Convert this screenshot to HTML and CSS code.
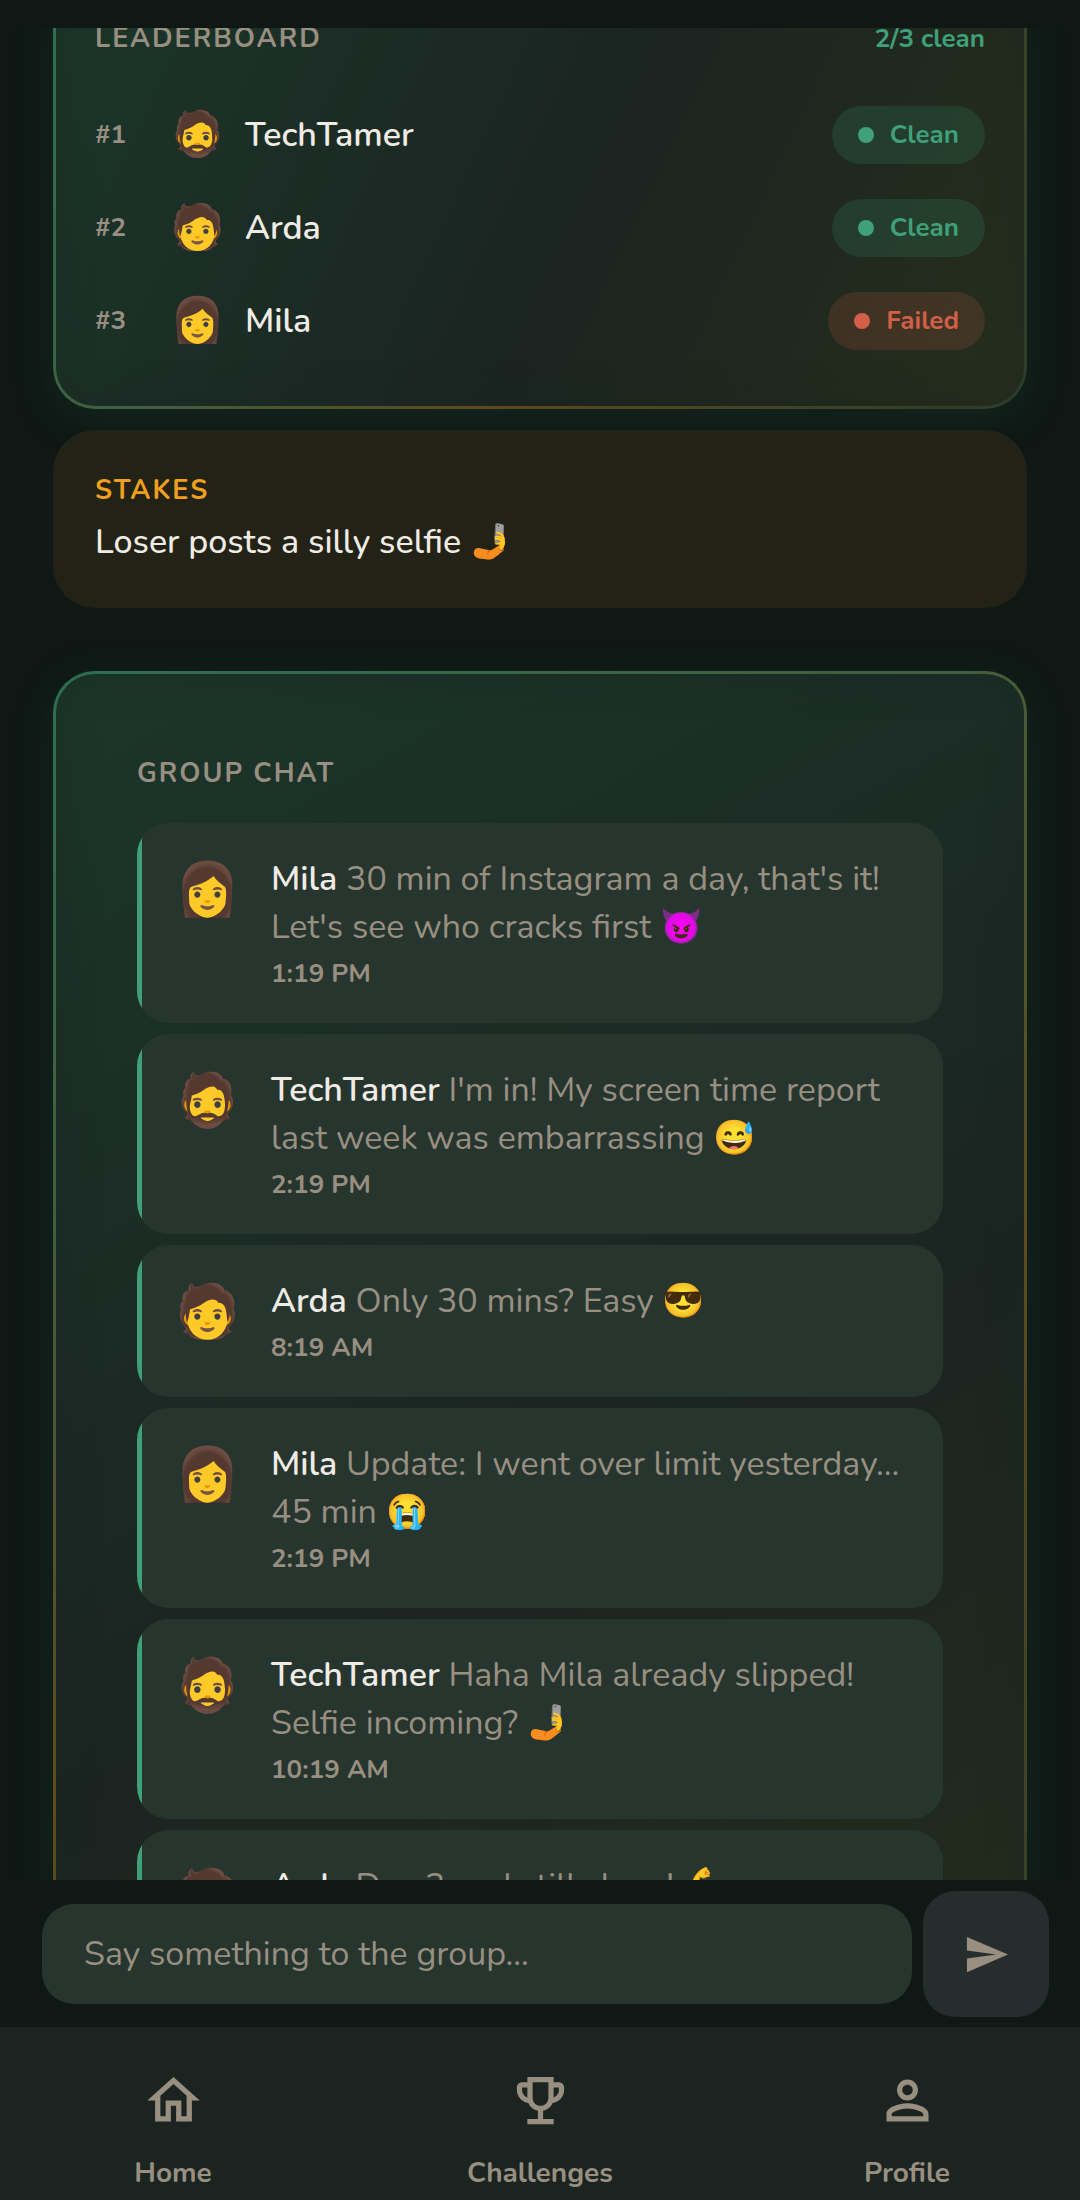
FILE: index.html
```html
<!DOCTYPE html>
<html lang="en">
<head>
  <meta charset="UTF-8">
  <title>Challenge</title>
  <meta name="viewport" content="width=device-width, initial-scale=1.0">
  <link rel="stylesheet" href="styles.css">
</head>
<body>

  <main class="feed">

    <!-- Leaderboard -->
    <section class="card leaderboard">
      <div class="card-header">
        <h2 class="label">LEADERBOARD</h2>
        <span class="clean-count">2/3 clean</span>
      </div>
      <ol class="ranks">
        <li class="rank-row">
          <span class="rank">#1</span>
          <span class="avatar">🧔</span>
          <span class="name">TechTamer</span>
          <span class="chip clean">Clean</span>
        </li>
        <li class="rank-row">
          <span class="rank">#2</span>
          <span class="avatar">🧑</span>
          <span class="name">Arda</span>
          <span class="chip clean">Clean</span>
        </li>
        <li class="rank-row">
          <span class="rank">#3</span>
          <span class="avatar">👩</span>
          <span class="name">Mila</span>
          <span class="chip failed">Failed</span>
        </li>
      </ol>
    </section>

    <!-- Stakes -->
    <section class="stakes">
      <h2 class="label">STAKES</h2>
      <p>Loser posts a silly selfie 🤳</p>
    </section>

    <!-- Group chat -->
    <section class="card chat">
      <h2 class="label">GROUP CHAT</h2>
      <div class="message">
        <span class="avatar">👩</span>
        <div class="message-body">
          <p><b>Mila</b> 30 min of Instagram a day, that's it! Let's see who cracks first 😈</p>
          <time>1:19 PM</time>
        </div>
      </div>
      <div class="message">
        <span class="avatar">🧔</span>
        <div class="message-body">
          <p><b>TechTamer</b> I'm in! My screen time report last week was embarrassing 😅</p>
          <time>2:19 PM</time>
        </div>
      </div>
      <div class="message">
        <span class="avatar">🧑</span>
        <div class="message-body">
          <p><b>Arda</b> Only 30 mins? Easy 😎</p>
          <time>8:19 AM</time>
        </div>
      </div>
      <div class="message">
        <span class="avatar">👩</span>
        <div class="message-body">
          <p><b>Mila</b> Update: I went over limit yesterday... 45 min 😭</p>
          <time>2:19 PM</time>
        </div>
      </div>
      <div class="message">
        <span class="avatar">🧔</span>
        <div class="message-body">
          <p><b>TechTamer</b> Haha Mila already slipped! Selfie incoming? 🤳</p>
          <time>10:19 AM</time>
        </div>
      </div>
      <div class="message">
        <span class="avatar">🧑</span>
        <div class="message-body">
          <p><b>Arda</b> Day 3 and still clean! 💪</p>
        </div>
      </div>
    </section>

  </main>

  <!-- Message box -->
  <form class="composer">
    <input type="text" aria-label="Message" placeholder="Say something to the group...">
    <button type="button" aria-label="Send">
      <svg viewBox="0 0 24 24"><path d="M2.01 21L23 12 2.01 3 2 10l15 2-15 2z"/></svg>
    </button>
  </form>

  <!-- Bottom navigation -->
  <nav class="tabs">
    <a href="#home">
      <svg viewBox="0 0 24 24"><path d="M12 5.69l5 4.5V18h-2v-6H9v6H7v-7.81l5-4.5M12 3L2 12h3v8h6v-6h2v6h6v-8h3L12 3z"/></svg>
      Home
    </a>
    <a href="#challenges">
      <svg viewBox="0 0 24 24"><path d="M19 5h-2V3H7v2H5c-1.1 0-2 .9-2 2v1c0 2.55 1.92 4.63 4.39 4.94.63 1.5 1.98 2.63 3.61 2.96V19H7v2h10v-2h-4v-3.1c1.63-.33 2.98-1.46 3.61-2.96C19.08 12.63 21 10.55 21 8V7c0-1.1-.9-2-2-2zM5 8V7h2v3.82C5.84 10.4 5 9.3 5 8zm7 6c-1.65 0-3-1.35-3-3V5h6v6c0 1.65-1.35 3-3 3zm7-6c0 1.3-.84 2.4-2 2.82V7h2v1z"/></svg>
      Challenges
    </a>
    <a href="#profile">
      <svg viewBox="0 0 24 24"><path d="M12 6c1.1 0 2 .9 2 2s-.9 2-2 2-2-.9-2-2 .9-2 2-2m0 9c2.7 0 5.8 1.29 6 2v1H6v-.99c.2-.72 3.3-2.01 6-2.01m0-11C9.79 4 8 5.79 8 8s1.79 4 4 4 4-1.79 4-4-1.79-4-4-4zm0 9c-2.67 0-8 1.34-8 4v3h16v-3c0-2.66-5.33-4-8-4z"/></svg>
      Profile
    </a>
  </nav>

</body>
</html>
```
FILE: styles.css
```css
* {
  box-sizing: border-box;
}

body {
  display: flex;
  flex-direction: column;
  height: 100vh;
  margin: 0;
  padding-top: 28px;
  overflow: hidden;
  background: #0f1815;
  color: #f0ebe4;
  font-family: Nunito, Lato, sans-serif;
  font-size: 34px;
  line-height: 48px;
}

h2, p, ol {
  margin: 0;
  padding: 0;
}

b {
  font-weight: 600;
}

.feed {
  flex: 1;
  min-height: 0;
  overflow: hidden;
  padding: 0 53px;
}

.label, .clean-count, .rank, .chip, time {
  font-size: 26px;
  font-weight: 700;
  line-height: 38px;
}

.label {
  font-size: 27px;
  letter-spacing: 2px;
  color: #988f80;
}

/* Cards */
.card {
  border: 3px solid transparent;
  border-radius: 42px;
  box-shadow: 0 10px 40px rgba(30, 80, 60, 0.25), inset 0 0 36px rgba(27, 37, 33, 0.5);
}

/* list is scrolled: the top of this card is above the feed */
.leaderboard {
  margin-top: -50px;
  padding: 39px;
  background:
    linear-gradient(115deg, #1b362a 0, #1b2421 54%, #262e1c 100%) padding-box,
    linear-gradient(115deg, #2b6f55 0, #5e4a1e 54%, #2a3d2b 100%) border-box;
}

.card-header {
  display: flex;
  justify-content: space-between;
}

.clean-count {
  color: #3fa07a;
}

.ranks {
  list-style: none;
  margin-top: 30px;
}

.rank-row {
  display: flex;
  align-items: center;
  height: 93px;
}

.rank {
  width: 68px;
  color: #988f80;
}

.avatar {
  flex: none;
  text-align: center;
}

.rank-row .avatar {
  width: 68px;
  font-size: 44px;
}

.name {
  flex: 1;
  margin-left: 14px;
  font-weight: 600;
}

.chip {
  display: flex;
  align-items: center;
  gap: 16px;
  padding: 10px 26px;
  border-radius: 42px;
}

.chip::before {
  content: "";
  width: 16px;
  height: 16px;
  border-radius: 50%;
  background: currentColor;
}

.clean {
  background: rgba(45, 125, 90, 0.25);
  color: #3fa07a;
}

.failed {
  background: rgba(210, 95, 70, 0.17);
  color: #d25f48;
}

/* Stakes */
.stakes {
  margin-top: 21px;
  padding: 42px;
  border-radius: 42px;
  background: #222316;
}

.stakes .label {
  color: #efa01e;
}

.stakes p {
  margin-top: 8px;
  font-weight: 500;
}

/* Chat */
.chat {
  display: flex;
  flex-direction: column;
  gap: 11px;
  margin-top: 63px;
  padding: 81px;
  background:
    linear-gradient(150deg, #1b362a 0, #1b2421 980px, #262e1c 1800px) padding-box,
    linear-gradient(150deg, #2b6f55 0, #5e4a1e 980px, #2a3d2b 1800px) border-box;
}

.chat .label {
  margin-bottom: 19px;
}

.message {
  display: flex;
  gap: 31px;
  padding: 32px 32px 30px 38px;
  border-radius: 32px;
  background: linear-gradient(90deg, #3fa07a 5px, #27352f 5px);
}

.message .avatar {
  width: 65px;
  font-size: 52px;
  line-height: 70px;
}

.message p {
  color: #988f80;
}

.message b {
  color: #f0ebe4;
}

time {
  display: block;
  margin-top: 4px;
  color: #988f80;
}

/* Composer */
.composer {
  display: flex;
  align-items: center;
  gap: 11px;
  padding: 11px 31px 10px 42px;
}

.composer input {
  flex: 1;
  min-width: 0;
  padding: 26px 42px;
  border: none;
  border-radius: 32px;
  background: #27352f;
  color: #f0ebe4;
  font: inherit;
}

.composer input::placeholder {
  color: #988f80;
  opacity: 1;
}

.composer button {
  display: grid;
  place-items: center;
  width: 126px;
  height: 126px;
  border: none;
  border-radius: 32px;
  background: #252e2c;
  color: #988f80;
}

svg {
  fill: currentColor;
}

.composer svg {
  width: 47px;
}

/* Tabs */
.tabs {
  display: grid;
  grid-template-columns: repeat(3, 1fr);
  gap: 21px;
  padding: 42px 0 7px;
  background: #1b2421;
}

.tabs a {
  display: flex;
  flex-direction: column;
  align-items: center;
  gap: 21px;
  color: #988f80;
  font-size: 28px;
  font-weight: 700;
  line-height: 40px;
  text-decoration: none;
}

.tabs svg {
  width: 63px;
  height: 63px;
}
```
